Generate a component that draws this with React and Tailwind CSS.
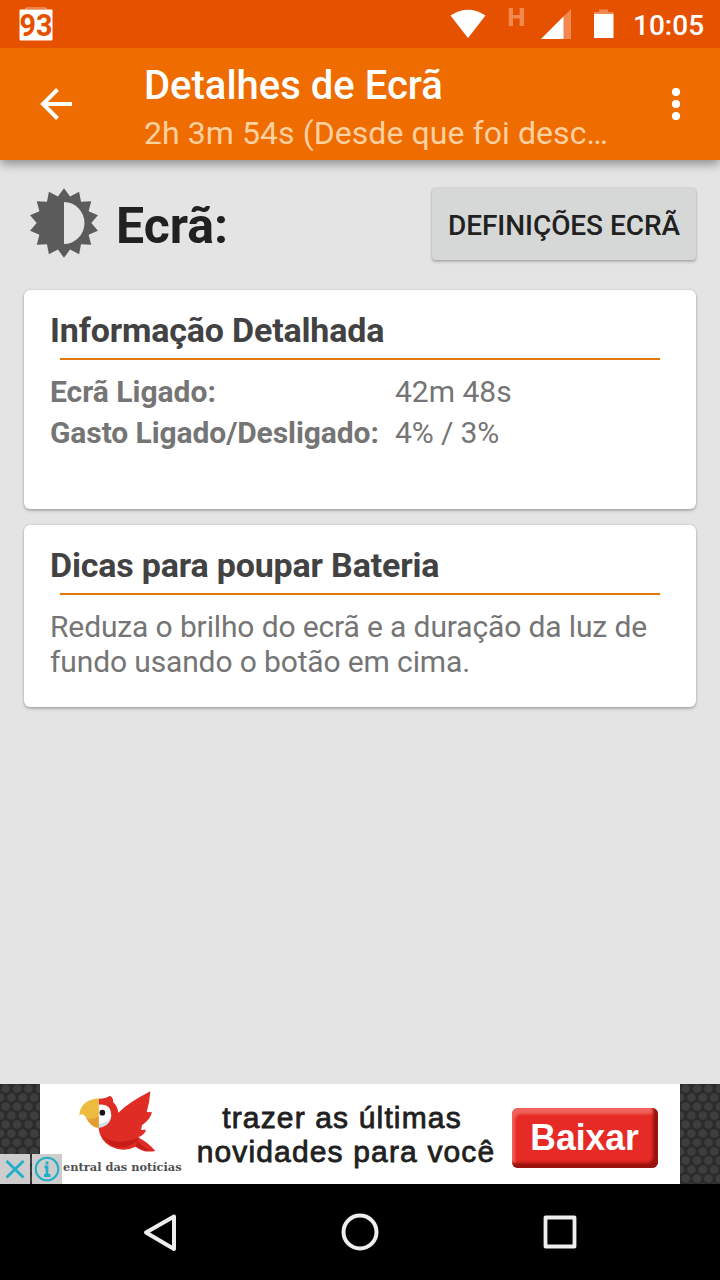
import React from "react";

const sunPoints = Array.from({ length: 28 }, (_, i) => {
  const r = i % 2 === 0 ? 34.8 : 27.3;
  const a = (i * Math.PI) / 14;
  return `${(35 + r * Math.sin(a)).toFixed(2)},${(35 - r * Math.cos(a)).toFixed(2)}`;
}).join(" ");

function StatusBar() {
  return (
    <div className="flex h-12 shrink-0 items-start bg-[#e65100]">
      <svg className="ml-[19px] mt-[7px] h-[34px] w-[34px]" viewBox="0 0 34 34">
        <path d="M7 3V1h20v2" fill="none" stroke="#fff" strokeOpacity=".6" strokeWidth="1" />
        <rect x="0.5" y="2.5" width="33" height="31" rx="1" fill="#fff" />
        <text x="17" y="28.5" textAnchor="middle" textLength="33" lengthAdjust="spacingAndGlyphs" fontFamily="Roboto, sans-serif" fontWeight="700" fontSize="30.5" fill="#e65100">93</text>
      </svg>
      <svg className="ml-[397px] h-12 w-[170px]" viewBox="450 0 170 48">
        <path d="M450.500 15.500Q468 4 485.500 15.500L468 38Z" fill="#fff" />
        <path d="M508.700 8h4.300v7h6.600V8h4.400v18h-4.400v-7.500H513V26h-4.300Z" fill="#f08850" />
        <path d="M571 9V39H541Z" fill="#f08850" />
        <path d="M563.500 16.500V39H541Z" fill="#fff" />
        <path d="M594 13v-1h5V9.500h9V12h5.500v2H594Z" fill="#f08850" />
        <rect x="594" y="14" width="19.500" height="24" fill="#fff" />
      </svg>
      <span className="ml-[13px] mt-[10px] whitespace-nowrap text-[28px] font-medium leading-8 text-white">10:05</span>
    </div>
  );
}

function AppBar() {
  return (
    <header className="z-10 flex h-28 shrink-0 bg-[#ef6c00] shadow-[0_4px_10px_rgba(0,0,0,0.38)] [clip-path:inset(0_0_-30px_0)]">
      <svg className="ml-10 mt-10 h-8 w-8" viewBox="0 0 32 32" fill="none" stroke="#fff" strokeWidth="4">
        <path d="M32 16H3M17.500 1.500L3 16l14.500 14.500" />
      </svg>
      <div className="ml-[72px] mt-[14px] w-[490px] whitespace-nowrap">
        <h1 className="text-[40px] font-medium leading-[47px] text-white">Detalhes de Ecrã</h1>
        <p className="text-[32px] leading-[48px] tracking-[0.070px] text-[#ffd0a0]">2h 3m 54s (Desde que foi desc…</p>
      </div>
      <svg className="ml-[37px] mt-10 h-8 w-[10px]" viewBox="0 0 10 32" fill="#fff">
        <circle cx="5" cy="4" r="4.100" />
        <circle cx="5" cy="16" r="4.100" />
        <circle cx="5" cy="28" r="4.100" />
      </svg>
    </header>
  );
}

function Card({ title, className, children }) {
  return (
    <section className={`mx-6 rounded-md bg-white pl-[26px] pr-9 pt-5 shadow-[0_0_2px_rgba(0,0,0,0.22),0_2px_3px_rgba(0,0,0,0.22)] ${className}`}>
      <h2 className="whitespace-nowrap text-[34px] font-bold leading-10 tracking-[-0.180px] text-[#424242]">{title}</h2>
      <div className="ml-[10px] mt-2 h-[2px] bg-[#e3780f]" />
      {children}
    </section>
  );
}

function AdPattern() {
  return (
    <svg className="h-[100px] w-10 shrink-0" viewBox="0 0 40 100">
      <defs>
        <pattern id="mesh" width="11.400" height="18" patternUnits="userSpaceOnUse">
          <rect width="12" height="18" fill="#2b2b2b" />
          <circle cx="5.700" cy="4.500" r="4.300" fill="#3e3e3e" />
          <circle cx="0" cy="13.500" r="4.300" fill="#3e3e3e" />
          <circle cx="11.400" cy="13.500" r="4.300" fill="#3e3e3e" />
        </pattern>
      </defs>
      <rect width="40" height="100" fill="url(#mesh)" />
    </svg>
  );
}

function Parrot() {
  return (
    <svg className="h-[100px] w-[150px]" viewBox="120 42 450 300">
      <path d="M296 86Q318 86 330 77Q341 83 339 96Q352 106 355 128Q385 98 451 64Q449 98 440 126L456 127Q450 150 426 166L423 180L438 179Q435 194 413 202Q443 216 466 243Q432 250 407 230Q369 249 331 229Q300 210 296 176Z" fill="#df2d25" />
      <path d="M306 193Q332 224 385 212Q411 207 421 198Q408 224 371 232Q326 237 306 193Z" fill="#c61d18" />
      <path d="M412 212Q430 236 459 241Q430 244 407 229Z" fill="#c61d18" />
      <path d="M296 104Q333 99 334 135Q332 167 296 172Z" fill="#fff" />
      <path d="M296 163Q322 158 331 145Q327 169 296 174Z" fill="#cce0e5" />
      <circle cx="307" cy="128" r="8.500" fill="#151515" />
      <path d="M296 85V174Q268 170 257 140Q246 127 238 137Q240 91 296 85Z" fill="#edbc3e" />
      <path d="M260 144Q278 151 296 139V174Q272 171 260 144Z" fill="#e49d32" />
    </svg>
  );
}

function AdBanner() {
  return (
    <div className="relative flex h-[100px] shrink-0 bg-white">
      <AdPattern />
      <div className="relative w-[150px]">
        <Parrot />
        <span className="absolute left-[23px] top-[76px] origin-left scale-x-[1.035] whitespace-nowrap font-['DejaVu_Serif',serif] text-[11px] font-bold leading-4 text-[#505050]">entral das notícias</span>
      </div>
      <div className="mt-[17px] flex w-[312px] flex-col items-center whitespace-nowrap font-['Liberation_Sans',sans-serif] text-[30px] leading-[34px] tracking-[1.150px] text-[#202020] [-webkit-text-stroke:0.800px_#202020]">
        <span className="-translate-x-[4px]">trazer as últimas</span>
        <span>novidades para você</span>
      </div>
      <div className="ml-[10px] mt-6 flex h-[60px] w-[146px] items-center justify-center rounded-md bg-[#e62a25] font-['Liberation_Sans',sans-serif] text-[37px] font-bold text-white shadow-[inset_-5px_-5px_3px_#98120f,inset_3px_6px_3px_#ef635c]">
        <span className="scale-x-[0.960]">Baixar</span>
      </div>
      <div className="ml-[22px] w-10"><AdPattern /></div>
      <div className="absolute bottom-0 left-0 flex h-[30px] w-[62px] gap-[2px]">
        <svg className="h-[30px] w-[30px] bg-[#cdcdcd]" viewBox="0 0 30 30">
          <path d="M6.500 7L23.500 23.500M23.500 7L6.500 23.500" stroke="#20aec8" strokeWidth="2.800" />
        </svg>
        <svg className="h-[30px] w-[30px] bg-[#cdcdcd]" viewBox="0 0 30 30" fill="none" stroke="#20aec8">
          <circle cx="15" cy="15" r="11.300" strokeWidth="2" />
          <path d="M15 7.500V10.500M12.500 13H15V21M12 21.500H18.500" strokeWidth="2.800" />
        </svg>
      </div>
    </div>
  );
}

export default function App() {
  return (
    <main className="flex h-[1280px] w-[720px] flex-col overflow-hidden bg-[#e4e4e4] font-[Roboto,sans-serif]">
      <StatusBar />
      <AppBar />
      <div className="flex h-[130px] shrink-0">
        <svg className="ml-[29px] mt-7 h-[70px] w-[70px]" viewBox="0 0 70 70">
          <polygon points={sunPoints} fill="#5b5b5b" />
          <path d="M35 14A20.500 21 0 0 1 35 56Z" fill="#e4e4e4" />
        </svg>
        <div className="ml-[17px] mt-[38px] w-[315px] whitespace-nowrap text-[50px] font-bold leading-[56px] text-[#212121]">Ecrã:</div>
        <button className="ml-px mt-7 h-[72px] w-[264px] whitespace-nowrap rounded bg-[#d6d8d7] pt-[3px] text-[28px] font-medium tracking-[-0.060px] text-[#212121] shadow-[0_0_2px_rgba(0,0,0,0.2),0_2px_3px_rgba(0,0,0,0.22)]">DEFINIÇÕES ECRÃ</button>
      </div>
      <Card title="Informação Detalhada" className="h-[219px]">
        <div className="mt-[11px] grid grid-cols-[345px_1fr] whitespace-nowrap text-[30px] leading-[41px] text-[#757575]">
          <b>Ecrã Ligado:</b>
          <span>42m 48s</span>
          <b className="tracking-[-0.090px]">Gasto Ligado/Desligado:</b>
          <span className="tracking-[-0.120px]">4% / 3%</span>
        </div>
      </Card>
      <Card title="Dicas para poupar Bateria" className="mt-4 h-[182px]">
        <p className="mt-[14px] whitespace-nowrap text-[30px] leading-[35px] tracking-[-0.130px] text-[#757575]">
          Reduza o brilho do ecrã e a duração da luz de<br />fundo usando o botão em cima.
        </p>
      </Card>
      <div className="flex-1" />
      <AdBanner />
      <nav className="h-24 shrink-0 bg-black">
        <svg className="h-24 w-[720px]" viewBox="0 0 720 96" fill="none" stroke="#eee" strokeWidth="4" strokeLinejoin="round">
          <path d="M174 32.500V65L146 48.500Z" />
          <circle cx="360" cy="48" r="16.500" />
          <rect x="545.500" y="33.500" width="29" height="29" strokeWidth="3.800" />
        </svg>
      </nav>
    </main>
  );
}
